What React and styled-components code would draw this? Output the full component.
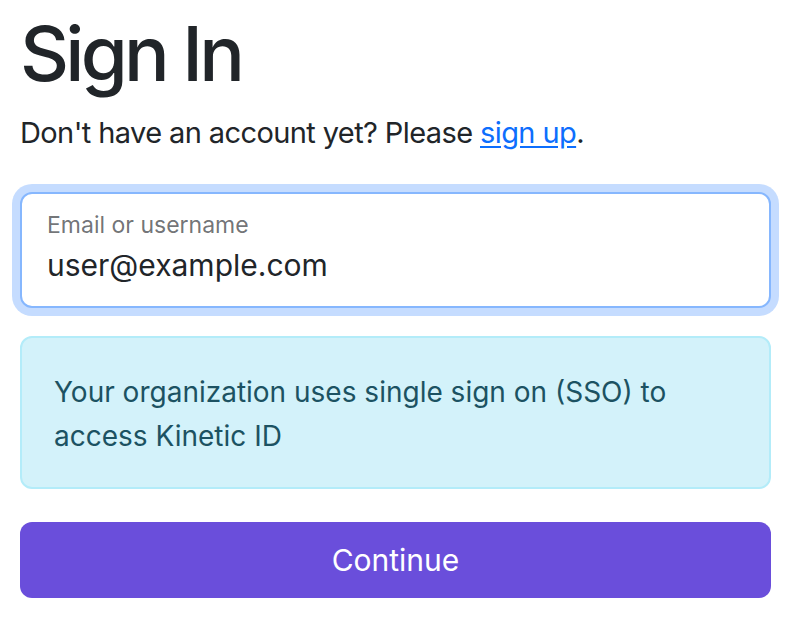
import React from 'react'
import { styled, createGlobalStyle } from 'styled-components'

const GlobalStyle = createGlobalStyle`
    html, body {
        margin: 0;
        padding: 0;
        background: #ffffff;
    }
    body {
        font-family: Inter, "Noto Sans", "Liberation Sans", sans-serif;
        color: #212529;
    }
`;

const Page = styled.div`
    box-sizing: border-box;
    width: 796px;
    padding: 8px 25px 0 20px;
`;

const Title = styled.h1`
    margin: 0 0 12px 0;
    font-size: 76px;
    font-weight: 500;
    line-height: 1.2;
    letter-spacing: -3.8px;
    color: #212529;
`;

const Lead = styled.p`
    margin: 0 0 37px 0;
    font-size: 29px;
    line-height: 1.5;
    letter-spacing: -0.6px;
    color: #212529;
`;

const Link = styled.a`
    color: #0d6efd;
    text-decoration: underline;
    text-underline-offset: 3px;
`;

const Field = styled.div`
    box-sizing: border-box;
    height: 116px;
    display: flex;
    flex-direction: column;
    gap: 8px;
    padding: 18px 25px 22px 25px;
    border: 2px solid #86b7fe;
    border-radius: 12px;
    background: #fff;
    box-shadow: 0 0 0 8px rgba(13, 110, 253, 0.24);
    margin-bottom: 28px;
`;

const FieldLabel = styled.label`
    font-size: 23px;
    line-height: 1.2;
    color: rgba(33, 37, 41, 0.65);
`;

const FieldValue = styled.input`
    border: none;
    outline: none;
    padding: 0;
    margin: 0;
    background: transparent;
    font-family: inherit;
    font-size: 30px;
    line-height: 1.2;
    height: 36px;
    color: #212529;
`;

const Alert = styled.div`
    box-sizing: border-box;
    padding: 32px 32px 29px 32px;
    border: 2px solid #b3ecf9;
    border-radius: 12px;
    background: #d3f2fa;
    color: #1c5262;
    font-size: 28px;
    line-height: 44px;
    margin-bottom: 33px;
`;

const Button = styled.button`
    box-sizing: border-box;
    width: 100%;
    height: 76px;
    display: flex;
    align-items: center;
    justify-content: center;
    border: none;
    border-radius: 12px;
    background: #6a4edb;
    color: #ffffff;
    font-family: inherit;
    font-size: 30px;
    font-weight: 400;
    cursor: pointer;
`;

const App = () => {
    return (
        <Page>
            <GlobalStyle />
            <Title>Sign In</Title>
            <Lead>
                Don't have an account yet? Please <Link href="#">sign up</Link>.
            </Lead>
            <Field>
                <FieldLabel htmlFor="login">Email or username</FieldLabel>
                <FieldValue id="login" defaultValue="user@example.com" />
            </Field>
            <Alert>
                Your organization uses single sign on (SSO) to access Kinetic ID
            </Alert>
            <Button>Continue</Button>
        </Page>
    )
}

export default App
